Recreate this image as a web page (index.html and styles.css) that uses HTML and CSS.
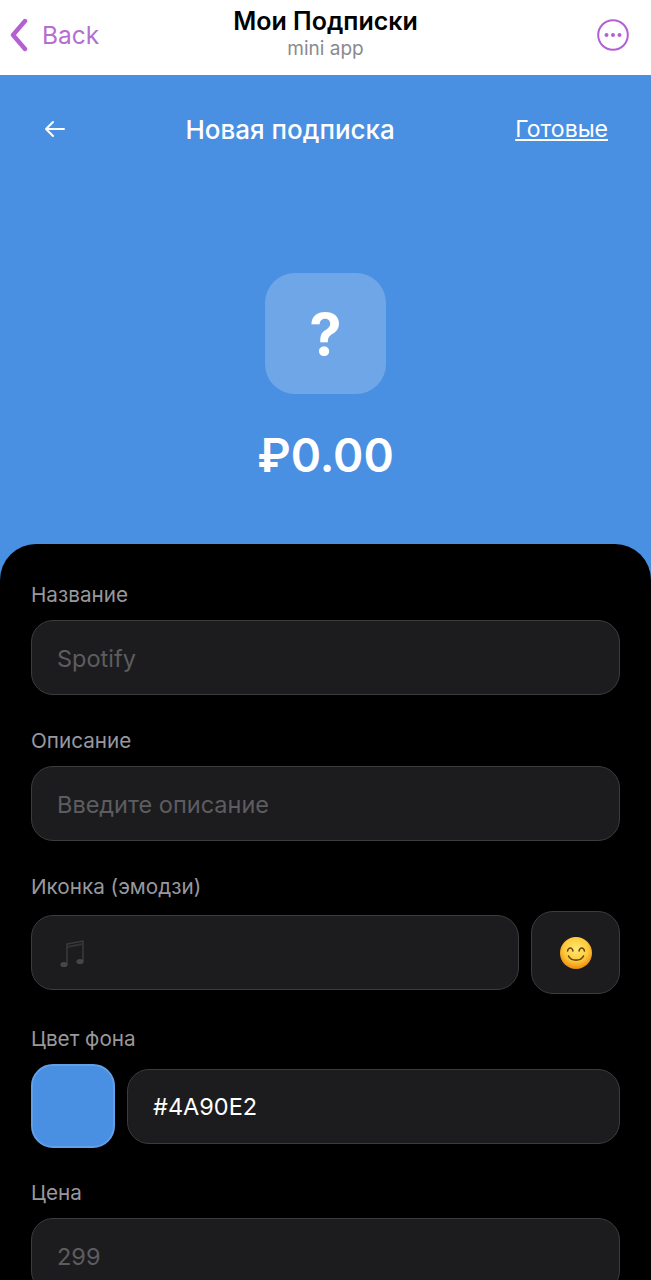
FILE: index.html
```html
<!DOCTYPE html>
<html lang="en">
<head>
    <meta charset="UTF-8">
    <meta name="viewport" content="width=device-width, initial-scale=1.0">
    <title>Мои Подписки</title>
    <link rel="stylesheet" href="styles.css">
</head>
<body>
    <div class="topbar">
        <div class="back">
            <svg class="back-icon" width="20" height="34" viewBox="0 0 20 34" fill="none">
                <path d="M17 3 L5 17 L17 31" stroke="#b45fd3" stroke-width="4.4" stroke-linecap="round" stroke-linejoin="round"/>
            </svg>
            <span>Back</span>
        </div>
        <div class="topbar-title">
            <div class="app-name">Мои Подписки</div>
            <div class="app-sub">mini app</div>
        </div>
        <svg class="more-icon" width="32" height="32" viewBox="0 0 32 32" fill="none">
            <circle cx="16" cy="16" r="14.8" stroke="#b45fd3" stroke-width="2"/>
            <circle cx="9.5" cy="16" r="2" fill="#b45fd3"/>
            <circle cx="16" cy="16" r="2" fill="#b45fd3"/>
            <circle cx="22.5" cy="16" r="2" fill="#b45fd3"/>
        </svg>
    </div>

    <div class="hero">
        <div class="hero-nav">
            <svg class="arrow" width="22" height="18" viewBox="0 0 22 18" fill="none">
                <path d="M21 9 H3 M10 2 L3 9 L10 16" stroke="#fff" stroke-width="2" stroke-linecap="round" stroke-linejoin="round"/>
            </svg>
            <div class="hero-title">Новая подписка</div>
            <a class="done">Готовые</a>
        </div>
        <div class="preview-icon">?</div>
        <div class="price">₽0.00</div>
    </div>

    <div class="sheet">
        <div class="field">
            <label>Название</label>
            <div class="input placeholder">Spotify</div>
        </div>
        <div class="field">
            <label>Описание</label>
            <div class="input placeholder">Введите описание</div>
        </div>
        <div class="field">
            <label>Иконка (эмодзи)</label>
            <div class="row row-icon">
                <div class="input grow">
                    <svg class="note" width="26" height="30" viewBox="0 0 26 30" fill="none">
                        <path d="M8 25 V5 L24 2 V22" stroke="#3c3c3f" stroke-width="1.4"/>
                        <path d="M8 8 L24 5" stroke="#333336" stroke-width="2.2"/>
                        <ellipse cx="5" cy="25.5" rx="3.6" ry="2.6" fill="#464649"/>
                        <ellipse cx="21" cy="22.5" rx="3.6" ry="2.6" fill="#464649"/>
                    </svg>
                </div>
                <div class="emoji-btn">
                    <svg width="32" height="32" viewBox="0 0 32 32" fill="none">
                        <defs>
                            <radialGradient id="face" cx="50%" cy="38%" r="62%">
                                <stop offset="0" stop-color="#ffe875"/>
                                <stop offset="0.6" stop-color="#fdcb3a"/>
                                <stop offset="1" stop-color="#ee8a12"/>
                            </radialGradient>
                        </defs>
                        <circle cx="16" cy="16" r="16" fill="url(#face)"/>
                        <path d="M7.5 14 C8.5 10 12 10 13 14 M19 14 C20 10 23.5 10 24.5 14" stroke="#6e4310" stroke-width="1.5" stroke-linecap="round"/>
                        <path d="M8.5 19 C11 24.5 21 24.5 23.5 19" stroke="#6e4310" stroke-width="1.6" stroke-linecap="round"/>
                    </svg>
                </div>
            </div>
        </div>
        <div class="field">
            <label>Цвет фона</label>
            <div class="row row-color">
                <div class="swatch"></div>
                <div class="input grow value">#4A90E2</div>
            </div>
        </div>
        <div class="field">
            <label>Цена</label>
            <div class="input placeholder">299</div>
        </div>
    </div>
</body>
</html>
```

FILE: styles.css
```css
* {
    box-sizing: border-box;
}
html, body {
    height: 1280px;
    overflow: hidden;
}
body {
    margin: 0;
    font-family: Inter, "Noto Sans", sans-serif;
    background-color: #4a90e2;
    color: #fff;
}
.topbar {
    height: 75px;
    background-color: #fff;
    display: grid;
    grid-template-columns: 1fr auto 1fr;
    align-items: center;
    padding: 0 8px 8px;
}
.back {
    display: flex;
    align-items: center;
    gap: 14px;
    color: #b56fd0;
    font-size: 24.5px;
    margin-top: 2px;
}
.back-icon {
    flex-shrink: 0;
}
.topbar-title {
    text-align: center;
}
.app-name {
    color: #000;
    font-size: 25px;
    font-weight: 600;
    line-height: 29px;
}
.app-sub {
    color: #8a8a8e;
    font-size: 19px;
    line-height: 22px;
    margin-top: 2px;
}
.more-icon {
    justify-self: end;
    margin: 2px 14px 0 0;
}
.hero {
    height: 469px;
    padding: 0 43px;
    text-align: center;
}
.hero-nav {
    display: flex;
    justify-content: space-between;
    align-items: center;
    height: 108px;
}
.hero-title {
    font-size: 26px;
    font-weight: 500;
}
.done {
    font-size: 23px;
    text-decoration: underline;
    text-underline-offset: 2px;
}
.preview-icon {
    width: 121px;
    height: 121px;
    margin: 90px auto 0;
    border-radius: 30px;
    background-color: rgba(255, 255, 255, 0.2);
    display: flex;
    align-items: center;
    justify-content: center;
    font-size: 58px;
    font-weight: 700;
}
.price {
    margin-top: 33px;
    font-size: 46px;
    font-weight: 600;
    line-height: 57px;
}
.sheet {
    height: 736px;
    background-color: #000;
    border-radius: 36px 36px 0 0;
    padding: 36px 31px 0;
}
.field {
    margin-bottom: 31px;
}
.field label {
    display: block;
    color: #98989e;
    font-size: 20.7px;
    line-height: 28px;
    padding-top: 1px;
    margin-bottom: 11px;
}
.input {
    height: 75px;
    display: flex;
    align-items: center;
    padding: 1px 25px 0;
    background-color: #1c1c1e;
    border: 1.5px solid #3c3c3e;
    border-radius: 22px;
    font-size: 23.5px;
}
.placeholder {
    color: #5d5d60;
}
.value {
    color: #fff;
}
.row {
    display: flex;
    align-items: center;
    gap: 12px;
}
.grow {
    flex-grow: 1;
}
.row-icon {
    margin: -1px 0;
}
.row-color {
    margin-bottom: -1px;
}
.note {
    margin: 2px 0 0 2px;
}
.emoji-btn {
    width: 89px;
    height: 83px;
    flex-shrink: 0;
    display: flex;
    align-items: center;
    justify-content: center;
    background-color: #1c1c1e;
    border: 1.5px solid #3c3c3e;
    border-radius: 22px;
}
.swatch {
    width: 84px;
    height: 84px;
    flex-shrink: 0;
    background-color: #4a90e2;
    border: 2px solid #629fe9;
    border-radius: 22px;
}
```
